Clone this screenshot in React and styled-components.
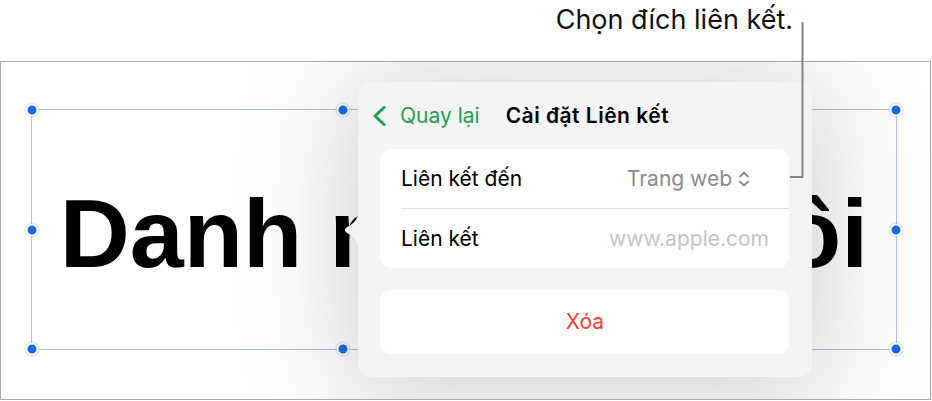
import React from 'react'
import styled, { createGlobalStyle } from 'styled-components'

const GlobalStyle = createGlobalStyle`
  html, body {
    margin: 0;
    padding: 0;
    background: #ffffff;
  }
  body {
    font-family: Inter, "Noto Sans", sans-serif;
    -webkit-font-smoothing: antialiased;
  }
`;

const Page = styled.div`
  position: relative;
  width: 932px;
  height: 401px;
  overflow: hidden;
  background: #ffffff;
`;

const TopBar = styled.div`
  height: 61px;
  box-sizing: border-box;
  display: flex;
  justify-content: flex-end;
  align-items: flex-start;
  padding: 3px 139px 0 0;
`;

const CalloutText = styled.div`
  font-size: 27px;
  color: #111111;
  line-height: normal;
`;

const CalloutLine = styled.svg`
  position: absolute;
  left: 780px;
  top: 20px;
  z-index: 5;
`;

const Canvas = styled.div`
  position: relative;
  width: 931px;
  height: 339px;
  box-sizing: border-box;
  border: 1px solid #ababab;
  background: #ffffff;
  overflow: hidden;
`;

const Selection = styled.div`
  position: absolute;
  left: 30px;
  top: 47px;
  width: 866px;
  height: 241px;
  box-sizing: border-box;
  border: 1px solid #a8c2f5;
  display: flex;
  align-items: center;
  justify-content: center;
  padding-top: 7px;
`;

const BigText = styled.div`
  font-family: "Liberation Sans", Arial, sans-serif;
  font-weight: 700;
  font-size: 97px;
  line-height: 1;
  color: #000000;
  white-space: nowrap;
`;

const Handle = styled.span`
  position: absolute;
  width: 9px;
  height: 9px;
  border-radius: 50%;
  background: #176be8;
  border: 2px solid #ffffff;
  box-shadow: 0 0 2px rgba(0, 0, 0, 0.35);
  left: ${({ $x }) => $x}%;
  top: ${({ $y }) => $y}%;
  transform: translate(-50%, -50%);
`;

const Popover = styled.div`
  position: absolute;
  left: 357px;
  top: 20px;
  width: 454px;
  height: 295px;
  box-sizing: border-box;
  background: #f4f4f4;
  border-radius: 14px;
  box-shadow: 0 10px 110px 14px rgba(0, 0, 0, 0.18);
  display: flex;
  flex-direction: column;
  padding-bottom: 23px;
  z-index: 2;
`;

const Arrow = styled.svg`
  position: absolute;
  left: -15px;
  top: 126px;
`;

const Header = styled.div`
  height: 67px;
  display: flex;
  align-items: center;
  padding-left: 14px;
  font-size: 21px;
  line-height: 24px;
`;

const BackButton = styled.div`
  display: flex;
  align-items: center;
  color: #1ea34f;
  margin-right: 26px;
  svg {
    margin-right: 14px;
  }
`;

const Title = styled.div`
  font-weight: 600;
  color: #000000;
  letter-spacing: 0.5px;
`;

const Body = styled.div`
  display: flex;
  flex-direction: column;
  gap: 22px;
  padding: 0 23px 0 22px;
`;

const Card = styled.div`
  background: #ffffff;
  border-radius: 11px;
  display: flex;
  flex-direction: column;
`;

const Row = styled.div`
  height: ${({ $h }) => $h || 59}px;
  display: flex;
  align-items: center;
  justify-content: ${({ $center }) => ($center ? 'center' : 'space-between')};
  padding: 0 20px 0 21px;
  font-size: 21px;
  line-height: 24px;
  color: #000000;
`;

const Separator = styled.div`
  height: 1px;
  margin-left: 21px;
  background: #e0e0e2;
`;

const Value = styled.span`
  display: flex;
  align-items: center;
  gap: 6px;
  margin-right: ${({ $inset }) => ($inset ? 19 : 0)}px;
  color: ${({ $muted }) => ($muted ? '#c5c5c8' : '#8a8a8e')};
`;

const Danger = styled.span`
  color: #fa4034;
`;

const handles = [
  [0, 0], [36, 0], [100, 0],
  [0, 50], [100, 50],
  [0, 100], [36, 100], [100, 100],
];

export default function App() {
  return (
    <>
      <GlobalStyle />
      <Page>
        <TopBar>
          <CalloutText>Chọn đích liên kết.</CalloutText>
        </TopBar>
        <CalloutLine width="30" height="162" viewBox="0 0 30 162">
          <path d="M22.5 2 V157 H10" fill="none" stroke="#868686" strokeWidth="2" />
        </CalloutLine>
        <Canvas>
          <Selection>
            <BigText>Danh mục của tôi</BigText>
            {handles.map(([x, y]) => (
              <Handle key={`${x}-${y}`} $x={x} $y={y} />
            ))}
          </Selection>
          <Popover>
            <Arrow width="16" height="44" viewBox="0 0 16 44">
              <path
                d="M16 0 C16 10 12 14 6 18 C0.5 21 0.5 23 6 26 C12 30 16 34 16 44 Z"
                fill="#f4f4f4"
              />
            </Arrow>
            <Header>
              <BackButton>
                <svg width="14" height="20" viewBox="0 0 14 20">
                  <path
                    d="M12 1.5 L3 10 L12 18.5"
                    fill="none"
                    stroke="#1ea34f"
                    strokeWidth="3"
                    strokeLinecap="round"
                    strokeLinejoin="round"
                  />
                </svg>
                Quay lại
              </BackButton>
              <Title>Cài đặt Liên kết</Title>
            </Header>
            <Body>
              <Card>
                <Row>
                  <span>Liên kết đến</span>
                  <Value $inset>
                    Trang web
                    <svg width="12" height="18" viewBox="0 0 12 18">
                      <path
                        d="M2 6.5 L6 2.5 L10 6.5 M2 11.5 L6 15.5 L10 11.5"
                        fill="none"
                        stroke="#8a8a8e"
                        strokeWidth="1.8"
                        strokeLinecap="round"
                        strokeLinejoin="round"
                      />
                    </svg>
                  </Value>
                </Row>
                <Separator />
                <Row>
                  <span>Liên kết</span>
                  <Value $muted>www.apple.com</Value>
                </Row>
              </Card>
              <Card>
                <Row $h={64} $center>
                  <Danger>Xóa</Danger>
                </Row>
              </Card>
            </Body>
          </Popover>
        </Canvas>
      </Page>
    </>
  )
}
